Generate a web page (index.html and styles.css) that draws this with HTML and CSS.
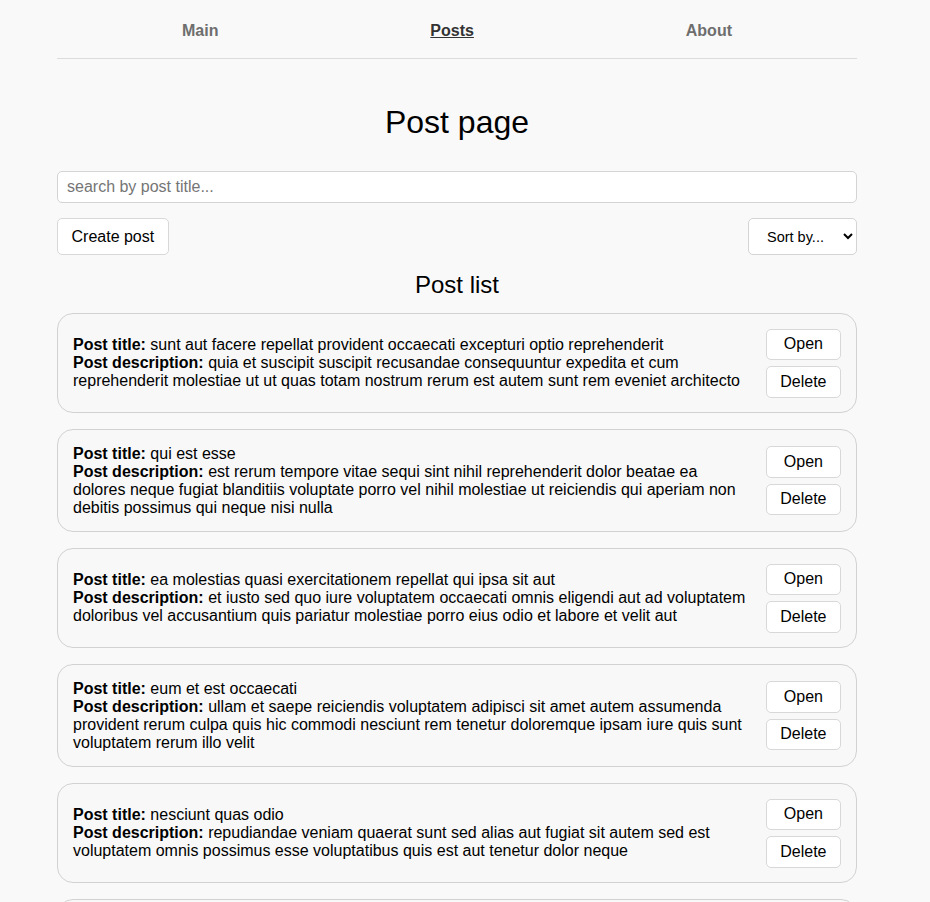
FILE: index.html
```html
<!DOCTYPE html>
<html lang="en">
<head>
<meta charset="utf-8">
<title>Post page</title>
<link rel="stylesheet" href="styles.css">
</head>
<body>
<div class="app">
  <nav class="navbar">
    <a class="nav-link" href="#">Main</a>
    <a class="nav-link active" href="#">Posts</a>
    <a class="nav-link" href="#">About</a>
  </nav>

  <h1 class="page-title">Post page</h1>

  <input class="search" type="text" placeholder="search by post title...">

  <div class="toolbar">
    <button class="btn btn-lg">Create post</button>
    <select class="sort">
      <option>Sort by...</option>
      <option>By title</option>
      <option>By description</option>
    </select>
  </div>

  <h2 class="list-title">Post list</h2>

  <div class="post-list">
    <div class="post">
      <div class="post-body">
        <div><strong>Post title:</strong> sunt aut facere repellat provident occaecati excepturi optio reprehenderit</div>
        <div><strong>Post description:</strong> quia et suscipit suscipit recusandae consequuntur expedita et cum reprehenderit molestiae ut ut quas totam nostrum rerum est autem sunt rem eveniet architecto</div>
      </div>
      <div class="post-actions">
        <button class="btn">Open</button>
        <button class="btn">Delete</button>
      </div>
    </div>
    <div class="post">
      <div class="post-body">
        <div><strong>Post title:</strong> qui est esse</div>
        <div><strong>Post description:</strong> est rerum tempore vitae sequi sint nihil reprehenderit dolor beatae ea dolores neque fugiat blanditiis voluptate porro vel nihil molestiae ut reiciendis qui aperiam non debitis possimus qui neque nisi nulla</div>
      </div>
      <div class="post-actions">
        <button class="btn">Open</button>
        <button class="btn">Delete</button>
      </div>
    </div>
    <div class="post">
      <div class="post-body">
        <div><strong>Post title:</strong> ea molestias quasi exercitationem repellat qui ipsa sit aut</div>
        <div><strong>Post description:</strong> et iusto sed quo iure voluptatem occaecati omnis eligendi aut ad voluptatem doloribus vel accusantium quis pariatur molestiae porro eius odio et labore et velit aut</div>
      </div>
      <div class="post-actions">
        <button class="btn">Open</button>
        <button class="btn">Delete</button>
      </div>
    </div>
    <div class="post">
      <div class="post-body">
        <div><strong>Post title:</strong> eum et est occaecati</div>
        <div><strong>Post description:</strong> ullam et saepe reiciendis voluptatem adipisci sit amet autem assumenda provident rerum culpa quis hic commodi nesciunt rem tenetur doloremque ipsam iure quis sunt voluptatem rerum illo velit</div>
      </div>
      <div class="post-actions">
        <button class="btn">Open</button>
        <button class="btn">Delete</button>
      </div>
    </div>
    <div class="post">
      <div class="post-body">
        <div><strong>Post title:</strong> nesciunt quas odio</div>
        <div><strong>Post description:</strong> repudiandae veniam quaerat sunt sed alias aut fugiat sit autem sed est voluptatem omnis possimus esse voluptatibus quis est aut tenetur dolor neque</div>
      </div>
      <div class="post-actions">
        <button class="btn">Open</button>
        <button class="btn">Delete</button>
      </div>
    </div>
    <div class="post">
      <div class="post-body">
        <div><strong>Post title:</strong> dolorem eum magni eos aperiam quia</div>
        <div><strong>Post description:</strong> ut aspernatur corporis harum nihil quis provident sequi mollitia nobis aliquid molestiae perspiciatis et ea nemo ab reprehenderit accusantium quas voluptate dolores velit et doloremque molestiae</div>
      </div>
      <div class="post-actions">
        <button class="btn">Open</button>
        <button class="btn">Delete</button>
      </div>
    </div>
  </div>
</div>
</body>
</html>
```

FILE: styles.css
```css
* {
  box-sizing: border-box;
}

html, body {
  margin: 0;
  padding: 0;
  background: #f9f9f9;
}

body {
  font-family: "Liberation Sans", Arial, sans-serif;
  font-size: 16px;
  color: #000;
}

.app {
  width: 800px;
  margin-left: 57px;
}

.navbar {
  height: 59px;
  display: flex;
  align-items: center;
  justify-content: space-between;
  padding: 4px 125px 0 125px;
  border-bottom: 1px solid #dcdcdc;
}

.nav-link {
  font-weight: bold;
  font-size: 16px;
  color: #6e6e6e;
  text-decoration: none;
}

.nav-link.active {
  color: #333;
  text-decoration: underline;
}

.page-title {
  margin: 45px 0 0;
  font-size: 32px;
  font-weight: normal;
  line-height: 37px;
  text-align: center;
}

.search {
  display: block;
  width: 100%;
  height: 32px;
  margin-top: 30px;
  padding: 0 9px;
  font-family: inherit;
  font-size: 16px;
  background: #fff;
  border: 1px solid #d4d4d4;
  border-radius: 5px;
  outline: none;
}

.search::placeholder {
  color: #757575;
}

.toolbar {
  display: flex;
  justify-content: space-between;
  align-items: center;
  margin-top: 15px;
}

.btn {
  font-family: inherit;
  font-size: 16px;
  color: #000;
  background: #fff;
  border: 1px solid #d8d8d8;
  border-radius: 5px;
  height: 31.5px;
  padding: 0 13.5px;
  line-height: 18px;
  cursor: pointer;
}

.btn-lg {
  height: 37px;
}

.sort {
  width: 109px;
  height: 37px;
  font-family: inherit;
  font-size: 14.5px;
  color: #000;
  background: #fff;
  border: 1px solid #d4d4d4;
  border-radius: 5px;
  padding: 0 4px 0 14px;
}

.list-title {
  margin: 16px 0 0;
  font-size: 24px;
  font-weight: normal;
  line-height: 28px;
  text-align: center;
}

.post-list {
  margin-top: 14px;
  display: flex;
  flex-direction: column;
  gap: 16px;
}

.post {
  display: flex;
  align-items: center;
  gap: 18px;
  padding: 14.5px 15px;
  border: 1px solid #d2d2d2;
  border-radius: 16px;
  background: #f8f8f8;
  line-height: 18px;
}

.post-body {
  flex: 1;
  min-width: 0;
}

.post-actions {
  display: flex;
  flex-direction: column;
  gap: 6px;
  flex-shrink: 0;
}
```
